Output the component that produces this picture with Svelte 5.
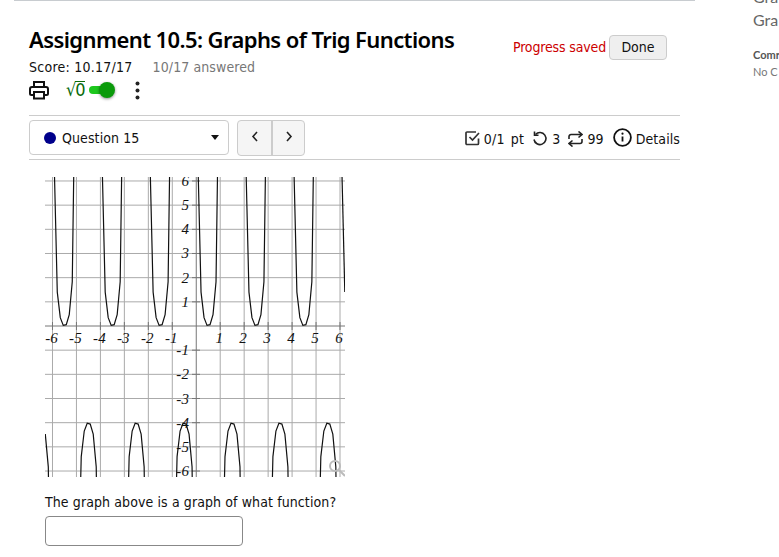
<script>
  const xAt = (v) => 196.25 + 23.96 * v;
  const yAt = (v) => 326 - 24.17 * v;
  const ticks = [-6, -5, -4, -3, -2, -1, 1, 2, 3, 4, 5, 6];

  // the plotter samples every 0.125 units, so the curve has visible corners
  let curves = [];
  let run = [];
  let lastY = 0;
  for (let x = -6.3; x <= 6.3; x += 0.125) {
    const y = 2 / Math.cos(Math.PI * (x + 5.5)) - 2;
    if (run.length && Math.sign(y + 2) !== Math.sign(lastY + 2)) {
      curves.push(run.join(' '));
      run = [];
    }
    run.push(xAt(x).toFixed(2) + ',' + yAt(y).toFixed(2));
    lastY = y;
  }
  if (run.length) curves.push(run.join(' '));
</script>

<div class="page">
  <main>
    <header class="title-row">
      <div>
        <h1>Assignment 10.5: Graphs of Trig Functions</h1>
        <div class="score">
          <span>Score: 10.17/17</span>
          <span class="answered">10/17 answered</span>
        </div>
      </div>
      <div class="saved">
        <span class="saved-text">Progress saved</span>
        <button class="done">Done</button>
      </div>
    </header>

    <div class="tools">
      <svg class="print" width="20" height="20" viewBox="0 0 20 20" fill="none" stroke="#111" stroke-width="2">
        <path d="M5 7V2h10v5" />
        <path d="M5 15H2.500a1.500 1.500 0 0 1-1.500-1.500V9a2 2 0 0 1 2-2h14a2 2 0 0 1 2 2v4.500a1.500 1.500 0 0 1-1.500 1.500H15" />
        <rect x="5" y="12" width="10" height="6.500" />
      </svg>
      <span class="sqrt">√<span class="radicand">0</span></span>
      <span class="toggle"><span class="knob"></span></span>
      <svg class="kebab" width="5" height="19" viewBox="0 0 5 19" fill="#222">
        <circle cx="2.500" cy="2.500" r="2" />
        <circle cx="2.500" cy="9.500" r="2" />
        <circle cx="2.500" cy="16.500" r="2" />
      </svg>
    </div>

    <nav class="question-bar">
      <div class="select">
        <span class="dot"></span>
        <span>Question 15</span>
        <span class="caret"></span>
      </div>
      <div class="pager">
        <button aria-label="previous">
          <svg width="8" height="11" viewBox="0 0 8 11" fill="none" stroke="#222" stroke-width="1.6"><path d="M6 1 2 5.500 6 10" /></svg>
        </button>
        <button aria-label="next">
          <svg width="8" height="11" viewBox="0 0 8 11" fill="none" stroke="#222" stroke-width="1.6"><path d="M2 1l4 4.500L2 10" /></svg>
        </button>
      </div>
      <div class="meta">
        <svg class="check" width="15" height="15" viewBox="0 0 15 15" fill="none" stroke="#333" stroke-width="1.700">
          <path d="M13.500 7.500v5a1 1 0 0 1-1 1h-10.500a1 1 0 0 1-1-1v-10.500a1 1 0 0 1 1-1h9" />
          <path d="M4.500 6l3 3 6.500-7" />
        </svg>
        <span class="pts">0/1 pt</span>
        <svg class="undo" width="16" height="16" viewBox="0 0 16 16" fill="none" stroke="#222" stroke-width="1.600">
          <path d="M3.500 3.500A6 6 0 1 1 2 8.500" />
          <path d="M2.500 .500v3.800h4" />
        </svg>
        <span class="tries">3</span>
        <svg class="retry" width="15" height="16" viewBox="0 0 15 16" fill="none" stroke="#222" stroke-width="1.600">
          <path d="M1 8V5.500a2 2 0 0 1 2-2h11M10.500 .500 14 3.500l-3.500 3" />
          <path d="M14 8v2.500a2 2 0 0 1-2 2H1M4.500 9.500 1 12.500l3.500 3" />
        </svg>
        <span class="count">99</span>
        <svg class="info" width="19" height="19" viewBox="0 0 19 19" fill="none" stroke="#111" stroke-width="1.800">
          <circle cx="9.500" cy="9.500" r="8.400" />
          <path d="M9.500 8.500v5" />
          <circle cx="9.500" cy="5.700" r="1.100" fill="#111" stroke="none" />
        </svg>
        <span>Details</span>
      </div>
    </nav>

    <figure class="graph">
      <svg width="300" height="300" viewBox="45 177 300 300">
        <g class="grid">
          {#each ticks as t}
            <line x1={xAt(t)} x2={xAt(t)} y1="177" y2="477" />
            <line x1="45" x2="345" y1={yAt(t)} y2={yAt(t)} />
          {/each}
        </g>
        <g class="axis">
          <line x1={xAt(0)} x2={xAt(0)} y1="177" y2="477" />
          <line x1="45" x2="345" y1={yAt(0)} y2={yAt(0)} />
          {#each ticks as t}
            <line x1={xAt(t)} x2={xAt(t)} y1="322" y2="330" />
            <line x1="192" x2="200" y1={yAt(t)} y2={yAt(t)} />
          {/each}
        </g>
        {#each curves as points}
          <polyline class="curve" {points} />
        {/each}
        {#each ticks as t}
          <text class="tick" x={xAt(t) - 1} y="343" text-anchor="middle">{t}</text>
          <text class="tick" x="189" y={yAt(t) + 5} text-anchor="end">{t}</text>
        {/each}
        <g class="zoom-glass">
          <circle cx="335" cy="466" r="5" />
          <path d="M339 470l6 6" />
        </g>
      </svg>
    </figure>

    <p class="prompt">The graph above is a graph of what function?</p>
    <input class="answer" type="text" />
  </main>

  <aside>
    <div class="grade cut">Gra</div>
    <div class="grade second">Gra</div>
    <div class="comment-label">Comr</div>
    <div class="comment">No C</div>
  </aside>
</div>

<style>
  :global(body) {
    margin: 0;
    background: #fff;
    overflow: hidden;
  }

  .page {
    display: flex;
    width: 779px;
    height: 557px;
    overflow: hidden;
    font-family: "DejaVu Sans", "Noto Sans", sans-serif;
    font-stretch: condensed;
    font-size: 14px;
    letter-spacing: 0.1px;
    white-space: nowrap;
    color: #111;
  }

  main {
    width: 651px;
    flex: none;
    margin-left: 14px;
    padding: 0 15px;
    border-top: 1px solid #c8ccd0;
  }

  .title-row {
    display: flex;
    justify-content: space-between;
    padding-top: 25px;
  }

  h1 {
    margin: 0;
    font-family: "Noto Sans", sans-serif;
    font-stretch: normal;
    font-size: 22px;
    line-height: 27px;
    font-weight: 600;
    letter-spacing: -0.6px;
    color: #000;
  }

  .score {
    display: flex;
    gap: 20px;
    margin-top: 5px;
    line-height: 18px;
    letter-spacing: 0.25px;
  }

  .answered {
    color: #777;
    letter-spacing: 0.1px;
  }

  .saved {
    display: flex;
    align-items: center;
    gap: 3px;
    height: 26px;
    margin-top: 8px;
    margin-right: 13px;
    color: #c00;
  }

  .saved-text {
    letter-spacing: -0.15px;
  }

  .done {
    height: 25px;
    width: 58px;
    padding: 0;
    border: 1px solid #ccc;
    border-radius: 4px;
    background: #efefef;
    font: inherit;
    font-stretch: condensed;
    color: #111;
  }

  .tools {
    display: flex;
    align-items: center;
    height: 24px;
    margin-top: 2px;
  }

  .sqrt {
    margin-left: 17px;
    color: #0a6b0a;
    font-size: 18px;
    line-height: 18px;
    letter-spacing: -1px;
  }

  .radicand {
    display: inline-block;
    border-top: 1px solid #0a6b0a;
    line-height: 15px;
  }

  .toggle {
    position: relative;
    width: 20px;
    height: 8px;
    margin-left: 4px;
    border-radius: 4px;
    background: #1dc71d;
  }

  .knob {
    position: absolute;
    top: -4px;
    right: -6px;
    width: 16px;
    height: 16px;
    border-radius: 50%;
    background: #0a9a0a;
    box-shadow: 0 1px 3px rgba(0, 0, 0, 0.45);
  }

  .kebab {
    margin-left: 26px;
  }

  .question-bar {
    display: flex;
    align-items: center;
    height: 43px;
    margin-top: 13px;
    border-top: 1px solid #ccc;
    border-bottom: 1px solid #ccc;
  }

  .select {
    display: flex;
    align-items: center;
    gap: 6px;
    width: 200px;
    height: 35px;
    padding-left: 14px;
    box-sizing: border-box;
    border: 1px solid #ccc;
    border-radius: 4px;
  }

  .dot {
    width: 12px;
    height: 12px;
    border-radius: 50%;
    background: #00008b;
  }

  .caret {
    margin-left: auto;
    margin-right: 9px;
    border-left: 4px solid transparent;
    border-right: 4px solid transparent;
    border-top: 5px solid #111;
  }

  .pager {
    display: flex;
    margin-left: 8px;
    height: 34px;
    border: 1px solid #ccc;
    border-radius: 4px;
    background: #f5f5f5;
  }

  .pager button {
    width: 33px;
    padding: 0;
    border: 0;
    background: none;
  }

  .pager button + button {
    border-left: 2px solid #ccc;
  }

  .meta {
    display: flex;
    align-items: center;
    margin-left: auto;
    padding-top: 2px;
  }

  .pts {
    margin-left: 4px;
    letter-spacing: 0.3px;
    word-spacing: 1.500px;
  }

  .undo {
    margin-left: 8px;
  }

  .tries {
    margin-left: 4px;
  }

  .retry {
    margin-left: 8px;
  }

  .count {
    margin-left: 4px;
  }

  .info {
    margin: -3px 4px 0 9px;
  }

  .graph {
    margin: 17px 0 0 16px;
    height: 300px;
  }

  .graph svg {
    display: block;
  }

  .grid line {
    stroke: #aaa;
    stroke-width: 1;
  }

  .axis line {
    stroke: #777;
    stroke-width: 1;
  }

  .curve {
    fill: none;
    stroke: #111;
    stroke-width: 1.200;
  }

  .tick {
    font-family: "Liberation Serif", serif;
    font-stretch: normal;
    font-style: italic;
    font-size: 15px;
    fill: #111;
  }

  .zoom-glass {
    fill: none;
    stroke: #bbb;
    stroke-width: 2;
  }

  .prompt {
    margin: 16px 0 0 16px;
    line-height: 18px;
  }

  .answer {
    display: block;
    width: 198px;
    height: 30px;
    margin: 5px 0 0 16px;
    padding: 0;
    box-sizing: border-box;
    border: 1px solid #888;
    border-radius: 4px;
    background: #fff;
  }

  aside {
    margin-left: 58px;
    flex: none;
    width: 60px;
    font-family: Lato, sans-serif;
    font-stretch: normal;
    letter-spacing: 0;
    color: #555;
  }

  .grade {
    font-size: 16px;
    line-height: 18px;
    color: #666;
  }

  .cut {
    margin-top: -12px;
  }

  .second {
    margin-top: 5px;
  }

  .comment-label {
    margin-top: 19px;
    font-size: 11px;
    font-weight: 700;
    line-height: 14px;
  }

  .comment {
    margin-top: 3px;
    font-size: 11px;
    line-height: 14px;
    color: #777;
  }
</style>
